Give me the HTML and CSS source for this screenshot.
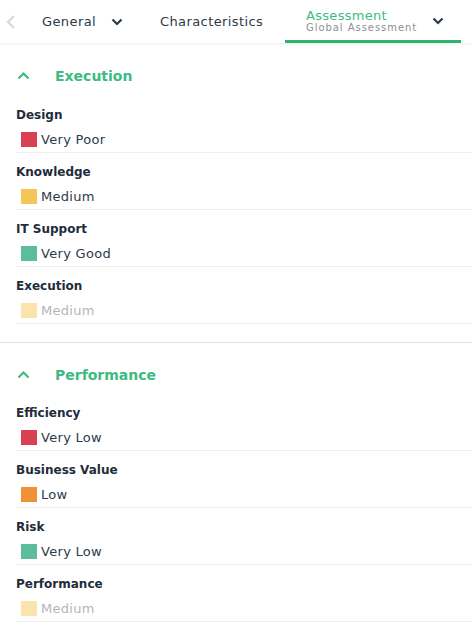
FILE: index.html
```html
<!DOCTYPE html>
<html>
<head>
<meta charset="utf-8">
<link rel="stylesheet" href="styles.css">
</head>
<body>
<nav class="tabs">
  <div class="tab-arrow">
    <svg width="10" height="14" viewBox="0 0 10 14"><path d="M8 1 L2 7 L8 13" fill="none" stroke="#d6d8db" stroke-width="2.2"/></svg>
  </div>
  <div class="tab tab-general">
    <span class="tab-label">General</span>
    <svg class="chev" width="12" height="8" viewBox="0 0 12 8"><path d="M1.5 1.5 L6 6 L10.5 1.5" fill="none" stroke="#2c3a4b" stroke-width="2.2"/></svg>
  </div>
  <div class="tab tab-char">
    <span class="tab-label">Characteristics</span>
  </div>
  <div class="tab tab-active">
    <div class="tab-stack">
      <span class="tab-title">Assessment</span>
      <span class="tab-sub">Global Assessment</span>
    </div>
    <svg class="chev" width="12" height="8" viewBox="0 0 12 8"><path d="M1.5 1.5 L6 6 L10.5 1.5" fill="none" stroke="#2c3a4b" stroke-width="2.2"/></svg>
  </div>
</nav>

<section class="section">
  <div class="section-head">
    <svg class="chev-up" width="13" height="8" viewBox="0 0 13 8"><path d="M1.5 6.5 L6.5 1.5 L11.5 6.5" fill="none" stroke="#3dbb82" stroke-width="2.2"/></svg>
    <span class="section-title">Execution</span>
  </div>
  <div class="item">
    <div class="item-label">Design</div>
    <div class="item-value"><span class="sw sw-red"></span>Very Poor</div>
  </div>
  <div class="item">
    <div class="item-label">Knowledge</div>
    <div class="item-value"><span class="sw sw-yellow"></span>Medium</div>
  </div>
  <div class="item">
    <div class="item-label">IT Support</div>
    <div class="item-value"><span class="sw sw-green"></span>Very Good</div>
  </div>
  <div class="item">
    <div class="item-label">Execution</div>
    <div class="item-value faded"><span class="sw sw-pale"></span>Medium</div>
  </div>
</section>

<section class="section section-second">
  <div class="section-head">
    <svg class="chev-up" width="13" height="8" viewBox="0 0 13 8"><path d="M1.5 6.5 L6.5 1.5 L11.5 6.5" fill="none" stroke="#3dbb82" stroke-width="2.2"/></svg>
    <span class="section-title">Performance</span>
  </div>
  <div class="item">
    <div class="item-label">Efficiency</div>
    <div class="item-value"><span class="sw sw-red"></span>Very Low</div>
  </div>
  <div class="item">
    <div class="item-label">Business Value</div>
    <div class="item-value"><span class="sw sw-orange"></span>Low</div>
  </div>
  <div class="item">
    <div class="item-label">Risk</div>
    <div class="item-value"><span class="sw sw-green"></span>Very Low</div>
  </div>
  <div class="item">
    <div class="item-label">Performance</div>
    <div class="item-value faded"><span class="sw sw-pale"></span>Medium</div>
  </div>
</section>
</body>
</html>
```

FILE: styles.css
```css
* { box-sizing: border-box; }
html, body { margin: 0; padding: 0; background: #fff; }
body {
  font-family: "DejaVu Sans", Verdana, sans-serif;
  color: #2c3a4b;
  width: 472px;
  overflow: hidden;
}

.tabs {
  display: flex;
  height: 44px;
  border-bottom: 1px solid #f1f2f3;
  box-shadow: 0 1px 2px rgba(0,0,0,0.03);
}
.tab-arrow {
  width: 24px;
  display: flex;
  align-items: center;
  padding-left: 6px;
}
.tab {
  display: flex;
  align-items: center;
  height: 43px;
}
.tab-label {
  font-size: 13px;
  letter-spacing: 0.4px;
  color: #2c3a4b;
}
.tab-general {
  width: 116px;
  padding-left: 18px;
  gap: 15px;
}
.tab-char {
  width: 145px;
  padding-left: 20px;
}
.tab-active {
  width: 176px;
  padding-left: 21px;
  padding-right: 17px;
  justify-content: space-between;
  border-bottom: 3px solid #2bb46a;
}
.tab-stack {
  display: flex;
  flex-direction: column;
  line-height: 12px;
  margin-top: 3px;
}
.tab-title {
  font-size: 13px;
  letter-spacing: 0.3px;
  color: #3dbb82;
}
.tab-sub {
  font-size: 10px;
  letter-spacing: 0.95px;
  color: #8c8f94;
}
.tab-active .chev { margin-top: 2px; }

.section {
  padding: 19px 0 18px 16px;
}
.section-second {
  border-top: 1px solid #dcdedf;
  padding-bottom: 0;
}
.section-head {
  display: flex;
  align-items: center;
  height: 26px;
  margin-bottom: 7px;
}
.section-second .section-head { margin-bottom: 6px; }
.chev-up {
  margin-left: 1px;
  margin-right: 25px;
}
.section-title {
  font-size: 14px;
  font-weight: bold;
  color: #3dbb82;
}
.item {
  padding-top: 10px;
  padding-bottom: 1px;
  border-bottom: 1px solid #efefef;
}
.item-label {
  font-size: 12px;
  font-weight: bold;
  line-height: 18px;
  color: #222c3a;
}
.item-value {
  display: flex;
  align-items: center;
  height: 24px;
  margin-top: 3px;
  padding-left: 5px;
  font-size: 13px;
  letter-spacing: 0.3px;
  color: #2c3a4b;
}
.item-value.faded { color: #b3b6bb; }
.sw {
  width: 16px;
  height: 15px;
  margin-right: 4px;
  flex: none;
}
.sw-red { background: #d94152; }
.sw-yellow { background: #f5c55a; }
.sw-green { background: #5bbd9c; }
.sw-orange { background: #f09137; }
.sw-pale { background: #fae3ad; }
```
